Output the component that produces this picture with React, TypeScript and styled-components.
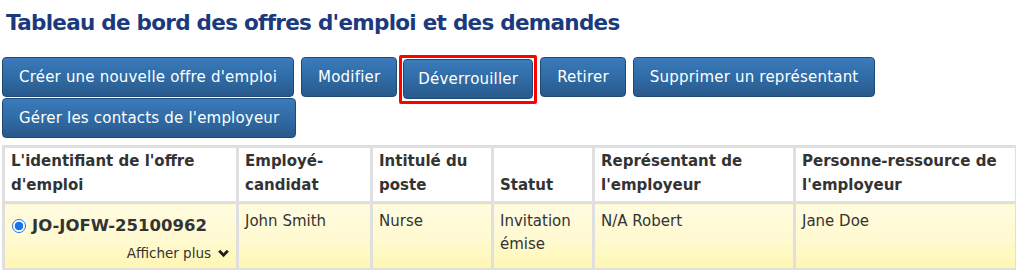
import styled, { createGlobalStyle } from 'styled-components';

const GlobalStyle = createGlobalStyle`
  body {
    margin: 0;
    background: #ffffff;
    font-family: 'DejaVu Sans', Verdana, sans-serif;
    color: #333333;
  }
`;

const buttons = [
  { label: "Créer une nouvelle offre d'emploi" },
  { label: 'Modifier' },
  { label: 'Déverrouiller', focused: true },
  { label: 'Retirer' },
  { label: 'Supprimer un représentant' },
  { label: "Gérer les contacts de l'employeur" },
];

const columns = [
  { title: "L'identifiant de l'offre d'emploi", width: 234 },
  { title: 'Employé-candidat', width: 134 },
  { title: 'Intitulé du poste', width: 121 },
  { title: 'Statut', width: 101 },
  { title: "Représentant de l'employeur", width: 201 },
  { title: "Personne-ressource de l'employeur", width: 222 },
];

const ChevronDown = () => (
  <svg width="11" height="9" viewBox="0 0 11 9">
    <path d="M1.2 1.8 L5.5 6.2 L9.8 1.8" fill="none" stroke="#1e1e1e" strokeWidth="2.8" />
  </svg>
);

const App = () => {
  return (
    <Page>
      <GlobalStyle />
      <Title>Tableau de bord des offres d'emploi et des demandes</Title>
      <Toolbar>
        {buttons.map((b) =>
          b.focused ? (
            <FocusRing key={b.label}>
              <ActionButton>{b.label}</ActionButton>
            </FocusRing>
          ) : (
            <ActionButton key={b.label}>{b.label}</ActionButton>
          )
        )}
      </Toolbar>
      <OffersTable>
        <colgroup>
          {columns.map((c) => (
            <col key={c.title} style={{ width: c.width }} />
          ))}
        </colgroup>
        <thead>
          <tr>
            {columns.map((c) => (
              <HeadCell key={c.title}>{c.title}</HeadCell>
            ))}
          </tr>
        </thead>
        <tbody>
          <tr>
            <BodyCell>
              <IdLine>
                <Radio />
                <span>JO-JOFW-25100962</span>
              </IdLine>
              <MoreLink>
                Afficher plus <ChevronDown />
              </MoreLink>
            </BodyCell>
            <BodyCell>John Smith</BodyCell>
            <BodyCell>Nurse</BodyCell>
            <BodyCell>Invitation émise</BodyCell>
            <BodyCell>N/A Robert</BodyCell>
            <BodyCell>Jane Doe</BodyCell>
          </tr>
        </tbody>
      </OffersTable>
    </Page>
  );
};

const Page = styled.div`
  width: 1016px;
  height: 270px;
  overflow: hidden;
  padding: 0 2px;
  box-sizing: border-box;
`;

const Title = styled.h1`
  margin: 0;
  padding: 10px 0 0 4px;
  height: 45px;
  box-sizing: border-box;
  font-family: 'DejaVu Sans', Tahoma, sans-serif;
  font-size: 21.5px;
  font-weight: bold;
  color: #1b3a7e;
  letter-spacing: -0.72px;
  white-space: nowrap;
`;

const Toolbar = styled.div`
  display: flex;
  flex-wrap: wrap;
  align-items: flex-start;
  column-gap: 7px;
  row-gap: 1px;
  width: 900px;
  margin-top: 12px;
`;

const ActionButton = styled.button`
  height: 40px;
  padding: 0 16px;
  border: 1px solid #1f4a77;
  border-radius: 4px;
  background: linear-gradient(to bottom, #3a7bbb 0%, #2f6aa3 55%, #29598b 100%);
  color: #ffffff;
  font-family: 'DejaVu Sans', Verdana, sans-serif;
  font-size: 15px;
  letter-spacing: 0.2px;
  white-space: nowrap;
  cursor: pointer;
`;

const FocusRing = styled.div`
  display: flex;
  padding: 1px 1px 2px;
  border: 3px solid #ff0000;
  border-radius: 2px;
  margin: -2px -4px -7px -5px;

  ${ActionButton} {
    padding: 0 14px;
  }
`;

const OffersTable = styled.table`
  margin-top: 7px;
  border-collapse: collapse;
  table-layout: fixed;
  width: 1015px;
  border: 3px solid #dfdfdf;
`;

const HeadCell = styled.th`
  border: 3px solid #dfdfdf;
  background: #ffffff;
  padding: 1px 6px 4px;
  text-align: left;
  vertical-align: bottom;
  font-size: 15px;
  font-weight: bold;
  line-height: 24px;
  color: #333333;
`;

const BodyCell = styled.td`
  border: 3px solid #dfdfdf;
  background: linear-gradient(to bottom, #fffbe0 0%, #fffad0 55%, #fff6b3 100%);
  padding: 6px 6px 3px;
  vertical-align: top;
  font-size: 15px;
  line-height: 23px;
  color: #333333;
`;

const IdLine = styled.div`
  display: flex;
  align-items: center;
  gap: 6px;
  font-weight: bold;
  font-size: 16.5px;
  padding-top: 4px;
  padding-left: 1px;
`;

const Radio = styled.span`
  width: 12px;
  height: 12px;
  border-radius: 50%;
  border: 1px solid #1a73e8;
  background: radial-gradient(circle, #1a73e8 0 4px, #ffffff 4.6px);
  flex-shrink: 0;
`;

const MoreLink = styled.div`
  display: flex;
  justify-content: flex-end;
  align-items: center;
  gap: 7px;
  font-size: 13.5px;
  margin-top: 5px;
  padding-right: 1px;
`;

export default App;
